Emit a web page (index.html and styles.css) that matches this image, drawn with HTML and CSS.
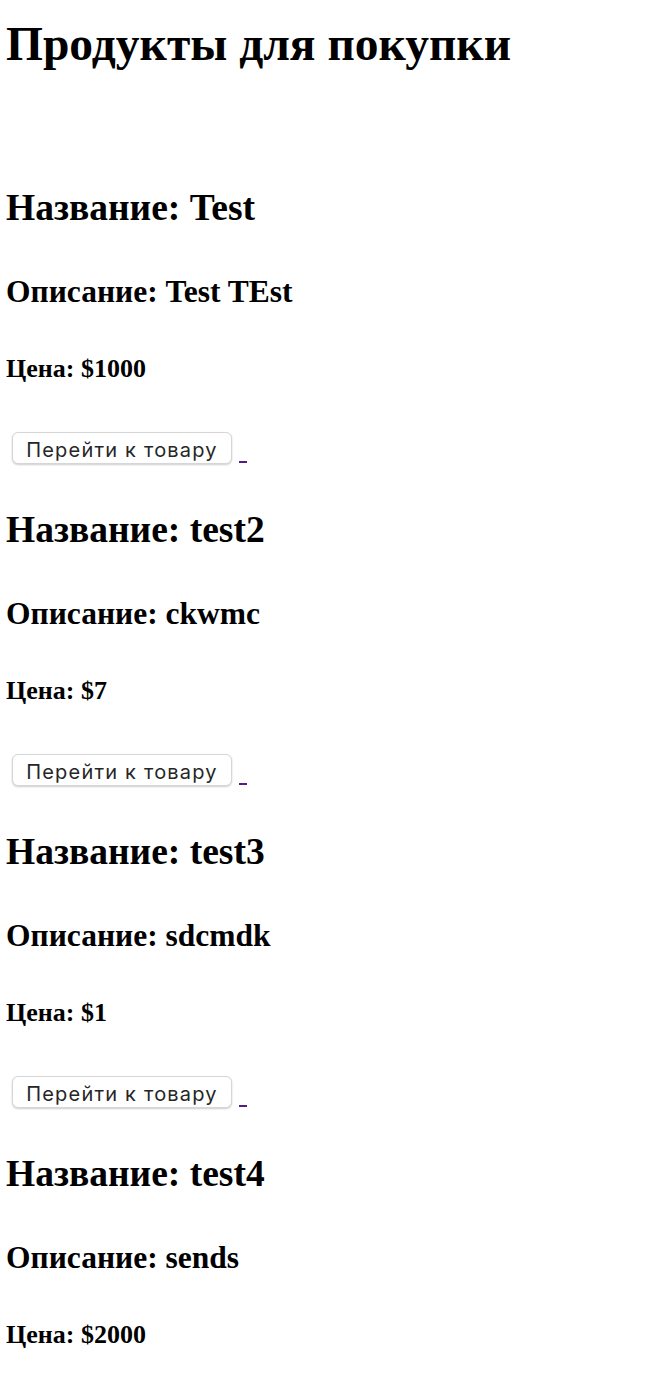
FILE: index.html
```html
<!DOCTYPE html>
<html lang="ru">
<head>
<meta charset="utf-8">
<title>Продукты для покупки</title>
<link rel="stylesheet" href="styles.css">
</head>
<body>
<h1 class="title">Продукты для покупки</h1>
<div class="list">
  <div class="item">
    <h2 class="name">Название: Test</h2>
    <h3 class="desc">Описание: Test TEst</h3>
    <h4 class="price">Цена: $1000</h4>
    <a class="link" href="#"><button class="btn">Перейти к товару</button><span class="tail">&nbsp;</span></a>
  </div>
  <div class="item">
    <h2 class="name">Название: test2</h2>
    <h3 class="desc">Описание: ckwmc</h3>
    <h4 class="price">Цена: $7</h4>
    <a class="link" href="#"><button class="btn">Перейти к товару</button><span class="tail">&nbsp;</span></a>
  </div>
  <div class="item">
    <h2 class="name">Название: test3</h2>
    <h3 class="desc">Описание: sdcmdk</h3>
    <h4 class="price">Цена: $1</h4>
    <a class="link" href="#"><button class="btn">Перейти к товару</button><span class="tail">&nbsp;</span></a>
  </div>
  <div class="item">
    <h2 class="name">Название: test4</h2>
    <h3 class="desc">Описание: sends</h3>
    <h4 class="price">Цена: $2000</h4>
  </div>
</div>
</body>
</html>
```
FILE: styles.css
```css
html, body {
  background: #ffffff;
}
body {
  margin: 0;
  padding: 16px 0 0 6px;
  font-family: "Liberation Serif", "Times New Roman", serif;
  color: #000000;
}
.title {
  margin: 0;
  font-size: 47.5px;
  line-height: 56px;
  font-weight: bold;
}
.list {
  display: flex;
  flex-direction: column;
  gap: 46px;
  margin-top: 116px;
}
.item {
  display: flex;
  flex-direction: column;
  align-items: flex-start;
}
.name {
  margin: 0;
  font-size: 37.5px;
  line-height: 40px;
}
.desc {
  margin: 47px 0 0;
  font-size: 31.5px;
  line-height: 34px;
}
.price {
  margin: 46px 0 0;
  font-size: 26px;
  line-height: 28px;
}
.link {
  margin-top: 49px;
  color: #551a8b;
  display: flex;
  align-items: flex-start;
  height: 32px;
  text-decoration: none;
}
.btn {
  margin: 0 0 0 6px;
  height: 32px;
  width: 220px;
  padding: 3px 0 0;
  background: #ffffff;
  border: 1px solid #d6d6d6;
  border-radius: 6px;
  box-shadow: 0 1px 2px rgba(0,0,0,0.2);
  font-family: Inter, "Noto Sans", sans-serif;
  font-size: 20px;
  line-height: 24px;
  color: #262626;
  letter-spacing: 1.2px;
}
.tail {
  display: block;
  width: 8px;
  height: 2px;
  margin: 29px 0 0 7px;
  background: #551a8b;
  font-size: 0;
}
```
